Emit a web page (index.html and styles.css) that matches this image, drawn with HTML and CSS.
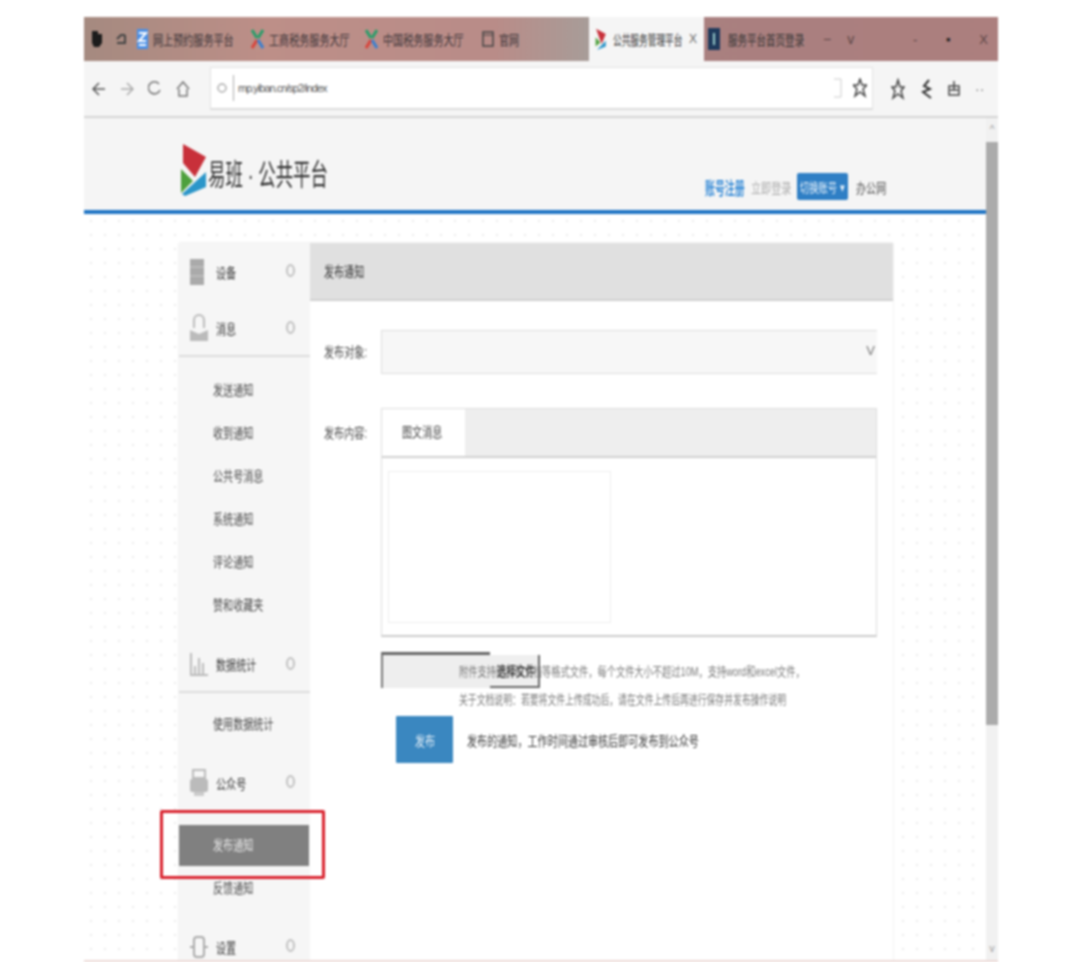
FILE: index.html
```html
<!DOCTYPE html>
<html lang="zh-CN">
<head>
  <meta charset="UTF-8">
  <title>易班 · 公共平台</title>
  <link rel="stylesheet" href="styles.css">
</head>
<body>
  <div class="browser">

    <!-- tabs -->
    <div class="tabstrip">
      <div class="pins">
        <svg class="pin" width="14" height="18" viewBox="0 0 14 18"><path d="M2 1h6v3h4v9l-3 4H4l-2-4z" fill="#1c1c1c"/></svg>
        <svg class="pin" width="12" height="12" viewBox="0 0 12 12"><path d="M10 2v8H2M2 6l4-4h4" fill="none" stroke="#444" stroke-width="2"/></svg>
      </div>
      <div class="tab tab-1"><svg width="11" height="20" viewBox="0 0 11 20"><rect width="11" height="20" fill="#4a90e8"/><path d="M2 4h7L2 12h7M2 16h7" stroke="#fff" stroke-width="2" fill="none"/></svg><span class="sq">网上预约服务平台</span></div>
      <div class="tab tab-2"><svg width="13" height="20" viewBox="0 0 13 20"><path d="M1 1l5 8M12 1L7 9" stroke="#2a9d6a" stroke-width="3"/><path d="M6 11l-5 8" stroke="#d8453c" stroke-width="3"/><path d="M7 11l5 8" stroke="#3a7fd0" stroke-width="3"/></svg><span class="sq">工商税务服务大厅</span></div>
      <div class="tab tab-3"><svg width="13" height="20" viewBox="0 0 13 20"><path d="M1 1l5 8M12 1L7 9" stroke="#2a9d6a" stroke-width="3"/><path d="M6 11l-5 8" stroke="#d8453c" stroke-width="3"/><path d="M7 11l5 8" stroke="#3a7fd0" stroke-width="3"/></svg><span class="sq">中国税务服务大厅</span></div>
      <div class="tab tab-4"><svg width="12" height="16" viewBox="0 0 12 16"><rect x="1" y="1" width="10" height="14" fill="none" stroke="#444" stroke-width="1.5"/><path d="M1 4h10" stroke="#444"/></svg><span class="sq">官网</span></div>
      <div class="tab-active">
        <svg width="13" height="22" viewBox="0 0 25 52"><path d="M2 2l23 12-10 24z" fill="#c8303a"/><path d="M1 22l11 12-11 10z" fill="#4da03c"/><path d="M25 30v14L4 52z" fill="#2b96c9"/></svg>
        <span class="sq">公共服务管理平台</span>
        <span class="close">X</span>
      </div>
      <div class="tab-last"><svg width="12" height="22" viewBox="0 0 12 22"><rect width="12" height="22" fill="#1f3a5c"/><path d="M6 5v12" stroke="#9cc" stroke-width="2"/></svg><span class="sq">服务平台首页登录</span></div>
      <div class="tab-menu"><span>−</span><span>v</span></div>
      <div class="win-controls"><span>-</span><span class="win-max">▪</span><span>X</span></div>
    </div>

    <!-- address bar -->
    <div class="toolbar">
      <div class="nav-icons">
        <svg width="14" height="18" viewBox="0 0 14 18"><path d="M13 9H2M7 3L1 9l6 6" fill="none" stroke="#555" stroke-width="1.5"/></svg>
        <svg width="14" height="18" viewBox="0 0 14 18"><path d="M1 9h11M7 3l6 6-6 6" fill="none" stroke="#aaa" stroke-width="1.5"/></svg>
        <svg width="14" height="18" viewBox="0 0 14 18"><path d="M11 4a6 6 0 1 0 1 6" fill="none" stroke="#777" stroke-width="1.5"/></svg>
        <svg width="14" height="18" viewBox="0 0 14 18"><path d="M1 9l6-7 6 7M3 9v7h8V9" fill="none" stroke="#777" stroke-width="1.5"/></svg>
      </div>
      <div class="address">
        <svg width="10" height="16" viewBox="0 0 10 16"><circle cx="5" cy="8" r="4" fill="none" stroke="#aaa" stroke-width="1.5"/></svg>
        <span class="url">mp.yiban.cn/sp2/index</span>
        <span class="addr-right">
          <svg width="8" height="20" viewBox="0 0 8 20"><path d="M0 1h7v18H0" fill="none" stroke="#ccc"/></svg>
          <svg width="14" height="20" viewBox="0 0 14 20"><path d="M7 1l2 6h5l-4 4 2 7-5-4-5 4 2-7-4-4h5z" fill="none" stroke="#444" stroke-width="1.5"/></svg>
        </span>
      </div>
      <div class="tool-icons">
        <svg width="14" height="22" viewBox="0 0 14 22"><path d="M7 2l2 7h4l-3 4 2 7-5-4-5 4 2-7-3-4h4z" fill="none" stroke="#444" stroke-width="1.5"/></svg>
        <svg width="14" height="22" viewBox="0 0 14 22"><path d="M10 2L5 8l6 3-7 3 8 6" fill="none" stroke="#333" stroke-width="2"/></svg>
        <svg width="14" height="22" viewBox="0 0 14 22"><path d="M2 8h10v9H2zM7 3v9M3 12h8" fill="none" stroke="#444" stroke-width="1.5"/></svg>
        <span class="more">··</span>
      </div>
    </div>

    <div class="viewport">
      <div class="page">
        <header class="site-header">
          <div class="logo">
            <svg width="26" height="53" viewBox="0 0 26 53"><path d="M3 1l23 13-11 20-12-14z" fill="#c8303a"/><path d="M1 26l12 12-12 12z" fill="#4da03c"/><path d="M26 29v15L5 53l-3-2z" fill="#2b96c9"/></svg>
            <span class="logo-text sq">易班 · 公共平台</span>
          </div>
          <nav class="user-nav">
            <span class="nav-main sq">账号注册</span>
            <span class="nav-grey sq">立即登录</span>
            <span class="nav-btn"><span class="sq-c">切换账号 ▾</span></span>
            <span class="nav-dark sq">办公网</span>
          </nav>
        </header>

        <div class="main">
          <div class="card">
            <aside class="sidebar">
              <div class="side-row">
                <svg width="14" height="26" viewBox="0 0 14 26"><rect width="14" height="26" fill="#aaa"/><path d="M0 8h14M0 17h14" stroke="#ccc"/></svg>
                <span class="side-title sq">设备</span><i class="dot"></i>
              </div>
              <div class="side-row side-row-line">
                <svg width="18" height="28" viewBox="0 0 18 28"><path d="M4 14V6a5 5 0 0 1 10 0v8" fill="none" stroke="#bbb" stroke-width="2"/><path d="M0 16l9 4 9-4v11H0z" fill="#bbb"/></svg>
                <span class="side-title sq">消息</span><i class="dot"></i>
              </div>
              <ul class="side-list side-list-line">
                <li><span class="sq">发送通知</span></li>
                <li><span class="sq">收到通知</span></li>
                <li><span class="sq">公共号消息</span></li>
                <li><span class="sq">系统通知</span></li>
                <li><span class="sq">评论通知</span></li>
                <li><span class="sq">赞和收藏夹</span></li>
              </ul>
              <div class="side-row side-row-line">
                <svg width="18" height="24" viewBox="0 0 18 24"><path d="M1 1v22h17M5 22v-8M9 22V6M13 22v-11" fill="none" stroke="#bbb" stroke-width="2"/></svg>
                <span class="side-title sq">数据统计</span><i class="dot"></i>
              </div>
              <ul class="side-list side-list-short side-list-line">
                <li><span class="sq">使用数据统计</span></li>
              </ul>
              <div class="side-row">
                <svg width="18" height="28" viewBox="0 0 18 28"><rect x="3" y="1" width="12" height="8" fill="none" stroke="#bbb" stroke-width="2"/><rect y="10" width="18" height="13" rx="2" fill="#bbb"/><rect x="4" y="23" width="10" height="4" fill="#ccc"/></svg>
                <span class="side-title sq">公众号</span><i class="dot"></i>
              </div>
              <div class="side-item-active"><span class="sq">发布通知</span></div>
              <ul class="side-list side-list-tail side-list-line">
                <li><span class="sq">反馈通知</span></li>
              </ul>
              <div class="side-row">
                <svg width="18" height="26" viewBox="0 0 18 26"><rect x="4" y="3" width="10" height="20" rx="3" fill="none" stroke="#aaa" stroke-width="2"/><path d="M0 13h4M14 13h4" stroke="#aaa" stroke-width="2"/></svg>
                <span class="side-title sq">设置</span><i class="dot"></i>
              </div>
            </aside>

            <section class="content">
              <h2 class="content-title"><span class="sq">发布通知</span></h2>
              <div class="form">
                <div class="form-row form-row-target">
                  <label class="sq">发布对象:</label>
                  <div class="select"><span class="chevron">V</span></div>
                </div>
                <div class="form-row">
                  <label class="label-top sq">发布内容:</label>
                  <div class="editor">
                    <div class="editor-tabs"><div class="editor-tab"><span class="sq">图文消息</span></div></div>
                    <div class="editor-body"><div class="editor-box"></div></div>
                  </div>
                </div>
                <div class="upload">
                  <div class="file-name"></div>
                  <div class="file-btn"></div>
                  <p class="hint">
                    <span>附件支持图片和文档等格式文件，每个文件大小不超过10M，支持word和excel文件，</span>
                    <span>关于文档说明：若要将文件上传成功后，请在文件上传后再进行保存并发布操作说明</span>
                  </p>
                  <span class="file-label sq">选择文件</span>
                </div>
                <div class="submit-row">
                  <button class="submit"><span class="sq-c">发布</span></button>
                  <span class="submit-note sq">发布的通知，工作时间通过审核后即可发布到公众号</span>
                </div>
              </div>
            </section>
          </div>
        </div>
      </div>

      <div class="scrollbar">
        <div class="scroll-arrow">^</div>
        <div class="scroll-thumb"></div>
        <div class="scroll-track"><span>v</span></div>
      </div>
    </div>
  </div>
</body>
</html>
```

FILE: styles.css
```css
*, *::after {
  box-sizing: border-box;
}
body {
  margin: 0;
  padding: 17px 0 0 84px;
  background: #fff;
  font-family: "Liberation Sans", "Noto Sans CJK SC", sans-serif;
  font-size: 14px;
  color: #444;
}
.sq {
  display: inline-block;
  white-space: nowrap;
  transform: scaleX(.72);
  transform-origin: left center;
}
.sq-c {
  display: inline-block;
  white-space: nowrap;
  transform: scaleX(.72);
}
svg {
  flex-shrink: 0;
}
.browser {
  width: 914px;
  height: 945px;
  overflow: hidden;
  filter: blur(.8px);
  border-bottom: 2px solid #ecd9d6;
}

/* tabs */
.tabstrip {
  display: flex;
  align-items: center;
  height: 44px;
  background: linear-gradient(90deg, #a58a80 0, #bd8f88 20%, #b98c88 45%, #a89c98 55%, #a98080 62%, #ac7f7e 100%);
  color: #333;
  font-size: 14px;
}
.pins {
  display: flex;
  align-items: center;
  gap: 11px;
  width: 53px;
  padding-left: 6px;
}
.tab {
  display: flex;
  align-items: center;
  gap: 5px;
  overflow: hidden;
  height: 100%;
}
.tab span {
  color: #3c3438;
}
.tab-1 { width: 114px; }
.tab-2 { width: 114px; }
.tab-3 { width: 117px; }
.tab-4 { width: 107px; }
.tab-active {
  display: flex;
  align-items: center;
  gap: 6px;
  width: 115px;
  height: 100%;
  padding-left: 5px;
  background: #f5f5f5;
  position: relative;
  color: #333;
}
.tab-active .sq {
  transform: scaleX(.62);
}
.close {
  position: absolute;
  right: 7px;
  font-size: 12px;
  color: #666;
}
.tab-last {
  display: flex;
  align-items: center;
  gap: 8px;
  width: 117px;
  height: 100%;
  padding-left: 4px;
}
.tab-last .sq {
  transform: scaleX(.68);
}
.tab-menu {
  display: flex;
  gap: 16px;
  width: 72px;
  padding-left: 2px;
  color: #5a4444;
}
.win-controls {
  display: flex;
  justify-content: space-between;
  width: 105px;
  padding: 0 10px 0 20px;
  color: #5a4444;
  font-size: 13px;
}
.win-max {
  color: #222;
}

/* toolbar */
.toolbar {
  display: flex;
  align-items: center;
  height: 57px;
  background: #f5f5f5;
  border-bottom: 2px solid #d4d4d4;
  padding-left: 8px;
}
.nav-icons {
  display: flex;
  gap: 14px;
  width: 118px;
}
.address {
  display: flex;
  align-items: center;
  gap: 6px;
  width: 663px;
  height: 43px;
  padding: 0 5px 0 6px;
  background: #fff;
  border: 1px solid #e2e2e2;
  border-bottom: 2px solid #dcdcdc;
}
.url {
  border-left: 1px solid #aaa;
  padding-left: 4px;
  font-size: 11px;
  letter-spacing: -1px;
  color: #555;
  line-height: 26px;
}
.addr-right {
  display: flex;
  gap: 11px;
  margin-left: auto;
}
.tool-icons {
  display: flex;
  align-items: center;
  gap: 14px;
  margin-left: 18px;
}
.more {
  color: #777;
}

/* page */
.viewport {
  display: flex;
  height: 842px;
}
.page {
  width: 902px;
  overflow: hidden;
}
.site-header {
  display: flex;
  justify-content: space-between;
  height: 96px;
  padding: 25px 0 0 96px;
  background: #f5f5f5;
  border-bottom: 4px solid #1f74c4;
}
.logo {
  display: flex;
  align-items: center;
  gap: 2px;
  height: 53px;
}
.logo-text {
  font-size: 30px;
  color: #333;
  transform: scaleX(.58);
  margin-top: 4px;
}
.user-nav {
  display: flex;
  align-items: center;
  gap: 8px;
  width: 281px;
  height: 27px;
  margin: 30px 0 0;
}
.user-nav .sq {
  width: 38px;
}
.nav-main {
  color: #3d8fd8;
  font-size: 18px;
  font-weight: bold;
  transform: scaleX(.55) !important;
}
.nav-grey {
  color: #aaa;
}
.nav-btn {
  display: flex;
  align-items: center;
  justify-content: center;
  width: 51px;
  height: 27px;
  background: #2f7fc5;
  border-radius: 2px;
  color: #e8f2fb;
  font-size: 13px;
}
.nav-dark {
  color: #555;
}
.main {
  height: 746px;
  padding: 29px 0 0 95px;
  background-color: #fff;
  background-image: radial-gradient(#eaeaea .8px, transparent 1px);
  background-size: 14px 14px;
}
.card {
  display: flex;
  width: 714px;
  height: 718px;
  background: #fff;
  box-shadow: 0 0 2px rgba(0, 0, 0, .12);
}

/* sidebar */
.sidebar {
  width: 131px;
  background: #f6f6f6;
  flex-shrink: 0;
}
.side-row {
  display: grid;
  grid-template-columns: 26px 1fr;
  align-items: center;
  height: 57px;
  padding-left: 11px;
  position: relative;
}
.side-row-line {
  border-bottom: 2px solid #dcdcdc;
}
.side-title {
  color: #3a3a3a;
}
.dot {
  position: absolute;
  right: 15px;
  top: 21px;
  width: 9px;
  height: 13px;
  border: 2px solid #c0c0c0;
  border-radius: 50%;
}
.side-list {
  list-style: none;
  margin: 0;
  padding: 12px 0 9px 34px;
}
.side-list li {
  height: 43px;
  line-height: 43px;
  color: #4a4a4a;
}
.side-list-short {
  padding: 10px 0 8px 34px;
}
.side-list-tail {
  padding: 1px 0 8px 34px;
}
.side-item-active {
  position: relative;
  height: 41px;
  line-height: 41px;
  margin-top: 14px;
  margin-right: 1px;
  padding-left: 34px;
  background: #808080;
  color: #e6e6e6;
  z-index: 1;
}
.side-item-active::after {
  content: "";
  position: absolute;
  left: -19px;
  top: -15px;
  width: 165px;
  height: 69px;
  border: 3px solid #d9202c;
  border-radius: 2px;
}

/* content */
.content {
  flex: 1;
  min-width: 0;
}
.content-title {
  height: 58px;
  margin: 0;
  padding-left: 14px;
  background: #e0e0e0;
  border-bottom: 2px solid #d0d0d0;
  font-size: 15px;
  font-weight: normal;
  line-height: 58px;
  color: #333;
}
.content-title .sq {
  transform: scaleX(.67);
}
.form {
  padding: 29px 16px 0 14px;
}
.form-row {
  display: flex;
  gap: 0;
}
.form-row label {
  width: 57px;
  flex-shrink: 0;
  line-height: 44px;
  color: #4a4a4a;
}
.form-row label.label-top {
  line-height: 50px;
}
.form-row-target {
  margin-bottom: 34px;
}
.select {
  position: relative;
  width: 496px;
  height: 44px;
  background: #f7f7f7;
  border: 1px solid #ddd;
  border-right: 0;
}
.chevron {
  position: absolute;
  right: 2px;
  top: 12px;
  color: #777;
  font-size: 13px;
}
.editor {
  width: 496px;
  height: 229px;
  border: 1px solid #ddd;
  border-bottom: 2px solid #ccc;
}
.editor-tabs {
  height: 49px;
  background: #eee;
  border-bottom: 2px solid #d0d0d0;
}
.editor-tab {
  width: 83px;
  height: 47px;
  padding-left: 20px;
  background: #fff;
  line-height: 47px;
  color: #444;
}
.editor-body {
  padding: 13px 0 0 6px;
}
.editor-box {
  width: 223px;
  height: 152px;
  border: 1px solid #eee;
}
.upload {
  position: relative;
  display: flex;
  align-items: flex-end;
  height: 36px;
  margin: 15px 0 0 57px;
}
.file-name {
  width: 109px;
  height: 36px;
  background: #eee;
  border-top: 3px solid #666;
  border-left: 2px solid #777;
}
.file-btn {
  width: 50px;
  height: 33px;
  background: #efefef;
  border-right: 2px solid #666;
  border-bottom: 2px solid #666;
}
.file-label {
  position: absolute;
  left: 116px;
  top: 8px;
  color: #222;
  font-size: 14px;
  transform: scaleX(.68);
}
.hint {
  position: absolute;
  left: 78px;
  top: 6px;
  margin: 0;
  font-size: 13px;
  line-height: 28px;
  color: #7a7a7a;
}
.hint span {
  display: block;
  white-space: nowrap;
  transform: scaleX(.71);
  transform-origin: left center;
}
.hint span:nth-child(2) {
  transform: scaleX(.68);
}
.submit-row {
  display: flex;
  align-items: center;
  gap: 14px;
  margin: 28px 0 0 72px;
}
.submit {
  width: 57px;
  height: 47px;
  padding: 0;
  background: #3a87c0;
  border: 0;
  border-radius: 1px;
  color: #e6f0f8;
  font-family: inherit;
  font-size: 14px;
}
.submit-note {
  color: #3a3a3a;
  font-size: 14px;
  transform: scaleX(.72);
}

/* scrollbar */
.scrollbar {
  display: flex;
  flex-direction: column;
  width: 12px;
  background: #f1f1f1;
  color: #999;
  font-size: 10px;
  text-align: center;
}
.scroll-arrow {
  height: 24px;
  line-height: 24px;
}
.scroll-thumb {
  height: 583px;
  background: #ababab;
}
.scroll-track {
  flex: 1;
  display: flex;
  align-items: flex-end;
  justify-content: center;
  padding-bottom: 6px;
}
```
